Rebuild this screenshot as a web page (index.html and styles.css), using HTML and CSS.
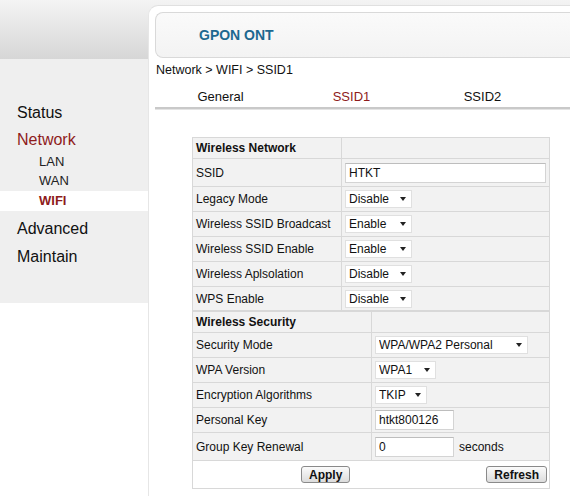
FILE: index.html
```html
<!DOCTYPE html>
<html lang="en">
<head>
    <meta charset="UTF-8">
    <title>GPON ONT - WIFI</title>
    <link rel="stylesheet" href="styles.css">
</head>
<body>
    <div class="page">
        <aside class="side">
            <div class="side-top"></div>
            <nav class="menu">
                <div class="menu-item">Status</div>
                <div class="menu-item current">Network</div>
                <div class="sub-item">LAN</div>
                <div class="sub-item">WAN</div>
                <div class="sub-item active">WIFI</div>
                <div class="menu-item gap">Advanced</div>
                <div class="menu-item">Maintain</div>
            </nav>
        </aside>

        <main class="panel">
            <div class="banner"><span class="brand">GPON ONT</span></div>
            <div class="crumb">Network &gt; WIFI &gt; SSID1</div>

            <div class="tabs">
                <div class="tab">General</div>
                <div class="tab active">SSID1</div>
                <div class="tab">SSID2</div>
            </div>
            <div class="tab-line"></div>

            <div class="form">
                <table class="grid net">
                    <tr class="head"><td>Wireless Network</td><td></td></tr>
                    <tr class="tall">
                        <td>SSID</td>
                        <td><input class="field w-ssid" type="text" value="HTKT"></td>
                    </tr>
                    <tr>
                        <td>Legacy Mode</td>
                        <td><span class="pick w-state"><select><option>Disable</option></select></span></td>
                    </tr>
                    <tr>
                        <td>Wireless SSID Broadcast</td>
                        <td><span class="pick w-state"><select><option>Enable</option></select></span></td>
                    </tr>
                    <tr>
                        <td>Wireless SSID Enable</td>
                        <td><span class="pick w-state"><select><option>Enable</option></select></span></td>
                    </tr>
                    <tr>
                        <td>Wireless Aplsolation</td>
                        <td><span class="pick w-state"><select><option>Disable</option></select></span></td>
                    </tr>
                    <tr>
                        <td>WPS Enable</td>
                        <td><span class="pick w-state"><select><option>Disable</option></select></span></td>
                    </tr>
                </table>

                <table class="grid sec">
                    <tr class="head"><td>Wireless Security</td><td></td></tr>
                    <tr>
                        <td>Security Mode</td>
                        <td><span class="pick w-mode"><select><option>WPA/WPA2 Personal</option></select></span></td>
                    </tr>
                    <tr>
                        <td>WPA Version</td>
                        <td><span class="pick w-ver"><select><option>WPA1</option></select></span></td>
                    </tr>
                    <tr>
                        <td>Encryption Algorithms</td>
                        <td><span class="pick w-enc"><select><option>TKIP</option></select></span></td>
                    </tr>
                    <tr>
                        <td>Personal Key</td>
                        <td><input class="field w-key" type="text" value="htkt800126"></td>
                    </tr>
                    <tr class="tall">
                        <td>Group Key Renewal</td>
                        <td><input class="field w-key" type="text" value="0"><span class="unit">seconds</span></td>
                    </tr>
                </table>

                <div class="actions">
                    <button class="btn">Apply</button>
                    <button class="btn">Refresh</button>
                </div>
            </div>
        </main>
    </div>
</body>
</html>
```

FILE: styles.css
```css
* {
    margin: 0;
    padding: 0;
    box-sizing: border-box;
}

body {
    font-family: "Liberation Sans", Arial, sans-serif;
    color: #111;
    background: #fff linear-gradient(#f4f4f4, #d6d6d6) no-repeat;
    background-size: 100% 59px;
}

.page {
    display: flex;
    min-height: 496px;
}

/* left menu */
.side {
    width: 148px;
    flex-shrink: 0;
}

.side-top {
    height: 59px;
}

.menu {
    height: 244px;
    background-color: #efefef;
    padding-top: 39px;
}

.menu-item {
    height: 28px;
    line-height: 28px;
    padding-left: 17px;
    font-size: 16px;
}

.menu-item:first-child {
    height: 29px;
    line-height: 29px;
}

.menu-item.current {
    height: 26px;
    line-height: 26px;
    color: #8e1b1b;
}

.menu-item.gap {
    margin-top: 4px;
}

.sub-item {
    height: 20px;
    line-height: 20px;
    padding-left: 39px;
    font-size: 13px;
    color: #222;
}

.sub-item:nth-child(3) {
    height: 18px;
    line-height: 18px;
}

.sub-item.active {
    background-color: #fff;
    color: #8e1b1b;
    font-weight: 700;
}

/* main panel */
.panel {
    flex: 1;
    margin-top: 5px;
    background-color: #fff;
    border-top: 1px solid #e0e0e0;
    border-left: 1px solid #e6e6e6;
    border-top-left-radius: 10px;
    overflow: hidden;
}

.banner {
    margin: 6px 0 0 6px;
    height: 46px;
    background: linear-gradient(#fafafa, #f3f3f3);
    border: 1px solid #d9d9d9;
    border-right: none;
    border-radius: 8px 0 0 8px;
    padding-left: 43px;
    line-height: 44px;
}

.brand {
    color: #1d6890;
    font-size: 14px;
    font-weight: 700;
}

.crumb {
    margin-top: 4px;
    padding-left: 7px;
    font-size: 12.5px;
    line-height: 16px;
}

.tabs {
    display: flex;
    margin: 8px 0 0 6px;
}

.tab {
    width: 131px;
    height: 21px;
    line-height: 21px;
    text-align: center;
    font-size: 13px;
}

.tab.active {
    color: #8e1b1b;
}

.tab-line {
    margin-left: 6px;
    height: 3px;
    border-top: 2px solid #c9c9c9;
    border-bottom: 1px solid #e4e4e4;
}

/* settings form */
.form {
    margin: 27px 0 0 43px;
    width: 358px;
}

.grid {
    width: 358px;
    border-collapse: collapse;
    font-size: 12px;
}

.grid td {
    height: 25px;
    background-color: #f2f2f2;
    border: 1px solid #d8d8d8;
    padding: 0 3px;
    vertical-align: middle;
    white-space: nowrap;
}

.grid tr.head td {
    height: 21px;
    font-weight: 700;
}

.grid tr.tall td {
    height: 28px;
}

.net tr:last-child td {
    height: 24px;
}

.net td:first-child {
    width: 149px;
}

.sec td:first-child {
    width: 179px;
}

.field {
    height: 20px;
    border: 1px solid #d4d4d4;
    border-top-color: #bdbdbd;
    background-color: #fff;
    font: 12px "Liberation Sans", Arial, sans-serif;
    color: #111;
    padding: 0 3px;
    vertical-align: middle;
}

.w-ssid {
    width: 201px;
}

.w-key {
    width: 79px;
}

.unit {
    margin-left: 5px;
    vertical-align: middle;
}

.pick {
    position: relative;
    display: inline-block;
    vertical-align: middle;
}

.pick select {
    appearance: none;
    -webkit-appearance: none;
    width: 100%;
    height: 18px;
    border: 1px solid #e0e0e0;
    background-color: #fff;
    font: 12px "Liberation Sans", Arial, sans-serif;
    color: #111;
    padding: 0 14px 0 3px;
    display: block;
}

.pick::after {
    content: "";
    position: absolute;
    right: 6px;
    top: 7px;
    border-left: 3.5px solid transparent;
    border-right: 3.5px solid transparent;
    border-top: 4px solid #222;
    pointer-events: none;
}

.w-state {
    width: 67px;
}

.w-mode {
    width: 153px;
}

.w-ver {
    width: 61px;
}

.w-enc {
    width: 52px;
}

.actions {
    display: flex;
    justify-content: space-between;
    align-items: center;
    height: 28px;
    border: 1px solid #d8d8d8;
    border-top: none;
    padding: 0 2px 0 108px;
}

.btn {
    height: 17px;
    padding: 0 7px;
    min-width: 48px;
    font: 700 12px "Liberation Sans", Arial, sans-serif;
    color: #111;
    background: linear-gradient(#fbfbfb, #dcdcdc);
    border: 1px solid #8a8a8a;
    border-radius: 3px;
}
```
